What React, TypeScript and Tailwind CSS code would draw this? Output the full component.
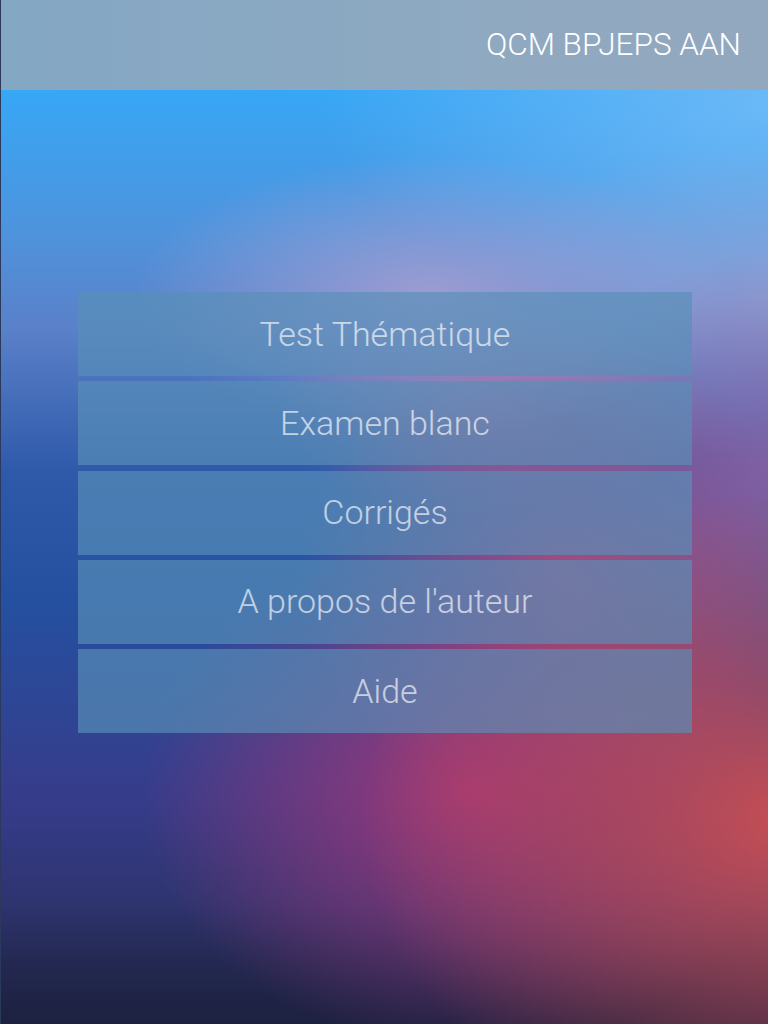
const items = [
  "Test Thématique",
  "Examen blanc",
  "Corrigés",
  "A propos de l'auteur",
  "Aide",
];

export default function App() {
  return (
    <div className="min-h-screen h-[1024px] border-l border-[#2b3a5c] font-['Roboto','Liberation_Sans',sans-serif] font-light bg-[#2550a0] bg-[radial-gradient(ellipse_300px_140px_at_430px_295px,rgba(170,160,210,0.85),transparent),radial-gradient(ellipse_430px_330px_at_790px_820px,#c84e52,rgba(196,76,82,0.55)_50%,transparent),radial-gradient(ellipse_330px_260px_at_470px_790px,rgba(165,55,118,0.95),rgba(150,55,120,0.5)_55%,transparent),radial-gradient(ellipse_260px_240px_at_560px_580px,rgba(190,75,125,0.85),transparent),radial-gradient(ellipse_220px_110px_at_490px_410px,rgba(200,110,155,0.6),transparent),radial-gradient(ellipse_230px_220px_at_780px_470px,rgba(140,100,165,0.85),transparent),radial-gradient(ellipse_320px_160px_at_780px_300px,rgba(150,165,215,0.85),transparent),radial-gradient(ellipse_460px_230px_at_780px_100px,#6cb9f7,transparent),linear-gradient(to_bottom,transparent_88%,rgba(28,30,62,0.7)),linear-gradient(to_bottom,#37a7f6_90px,#4f92db_240px,#5a80c8_330px,#2f5aaa_470px,#2550a0_600px,#363c8a_800px,#2c3268_930px,#1f2848_1024px)]">
      <header className="h-[90px] flex items-center justify-end pr-[27px] bg-[linear-gradient(to_right,#84a7c4,#8ea9c1_60%,#93a8bf)]">
        <h1 className="text-[31.5px] text-white">QCM BPJEPS AAN</h1>
      </header>
      <nav className="ml-[77px] mt-[202px] w-[614px] flex flex-col gap-[5.25px]">
        {items.map((label) => (
          <button
            key={label}
            className="h-[84px] w-full flex items-center justify-center bg-[rgba(88,143,184,0.67)] text-[34px] text-white/65"
          >
            {label}
          </button>
        ))}
      </nav>
    </div>
  );
}
